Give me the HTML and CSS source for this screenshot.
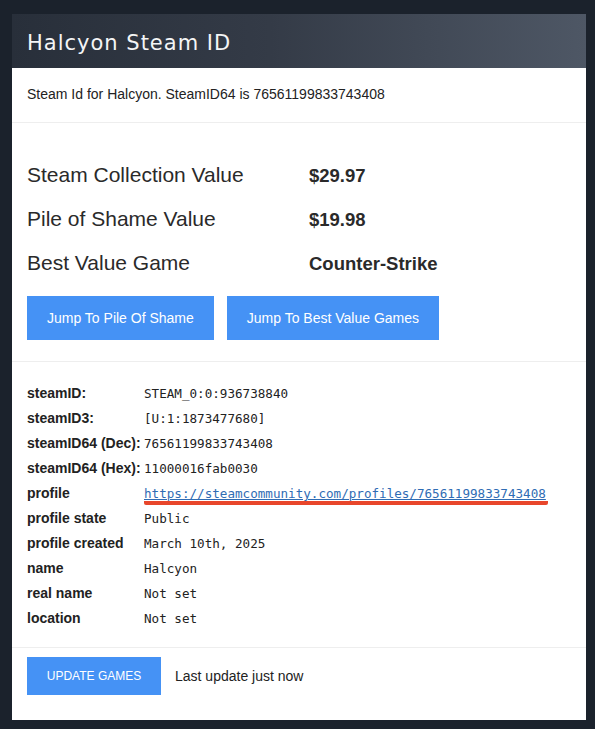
FILE: index.html
```html
<!DOCTYPE html>
<html lang="en">
<head>
<meta charset="utf-8">
<title>Halcyon Steam ID</title>
<link rel="stylesheet" href="styles.css">
</head>
<body>
<div class="card">
  <div class="card-header"><h1 class="title">Halcyon Steam ID</h1></div>
  <div class="section intro">Steam Id for Halcyon. SteamID64 is 76561199833743408</div>
  <div class="section values">
    <div class="value-grid">
      <div class="v-label">Steam Collection Value</div><div class="v-value">$29.97</div>
      <div class="v-label">Pile of Shame Value</div><div class="v-value">$19.98</div>
      <div class="v-label">Best Value Game</div><div class="v-value">Counter-Strike</div>
    </div>
    <div class="btn-row">
      <a class="btn btn-lg" href="#shame">Jump To Pile Of Shame</a>
      <a class="btn btn-lg" href="#best">Jump To Best Value Games</a>
    </div>
  </div>
  <div class="section info">
    <dl class="info-grid">
      <dt>steamID:</dt><dd>STEAM_0:0:936738840</dd>
      <dt>steamID3:</dt><dd>[U:1:1873477680]</dd>
      <dt>steamID64 (Dec):</dt><dd>76561199833743408</dd>
      <dt>steamID64 (Hex):</dt><dd>11000016fab0030</dd>
      <dt>profile</dt><dd><span class="mark"><a class="link" href="#">https://steamcommunity.com/profiles/76561199833743408</a></span></dd>
      <dt>profile state</dt><dd>Public</dd>
      <dt>profile created</dt><dd>March 10th, 2025</dd>
      <dt>name</dt><dd>Halcyon</dd>
      <dt>real name</dt><dd>Not set</dd>
      <dt>location</dt><dd>Not set</dd>
    </dl>
  </div>
  <div class="section footer">
    <a class="btn btn-sm" href="#">UPDATE GAMES</a>
    <span class="updated">Last update just now</span>
  </div>
</div>
</body>
</html>
```
FILE: styles.css
```css
* { box-sizing: border-box; }
html, body { margin: 0; }
body {
  background: #1b222c;
  padding: 14px 9px 9px 12px;
  font-family: "Liberation Sans", Arial, sans-serif;
  color: #222;
}
.card {
  width: 574px;
  background: #fff;
}
.card-header {
  height: 54px;
  display: flex;
  align-items: center;
  padding: 0 15px;
  background: linear-gradient(90deg, #282f3a 0%, #343b47 45%, #4e5765 100%);
}
.title {
  margin: 0;
  font-family: "DejaVu Sans", sans-serif;
  font-weight: normal;
  font-size: 21px;
  letter-spacing: 1px;
  color: #f4f5f6;
  line-height: 1;
  padding-top: 5px;
}
.section {
  padding: 0 15px;
  border-bottom: 1px solid #eeeeee;
}
.intro {
  font-size: 14px;
  line-height: 16px;
  padding-top: 18px;
  padding-bottom: 20px;
}
.values {
  padding-top: 29px;
  padding-bottom: 21px;
}
.value-grid {
  display: grid;
  grid-template-columns: 282px 1fr;
  grid-auto-rows: 44px;
  align-items: center;
}
.v-label {
  font-size: 21px;
  line-height: 24px;
  padding-top: 2px;
  color: #2a2a2a;
}
.v-value {
  font-size: 18.5px;
  font-weight: bold;
  line-height: 24px;
  padding-top: 3px;
  color: #2a2a2a;
}
.btn-row {
  display: flex;
  gap: 13px;
  margin-top: 12px;
}
.btn {
  display: inline-flex;
  align-items: center;
  justify-content: center;
  background: #4592f5;
  color: #fff;
  text-decoration: none;
  padding: 0 20px;
}
.btn-lg {
  height: 44px;
  font-size: 14px;
}
.btn-sm {
  height: 38px;
  font-size: 12px;
  width: 134px;
  padding: 0;
}
.info {
  padding-top: 19px;
  padding-bottom: 16px;
}
.info-grid {
  margin: 0;
  display: grid;
  grid-template-columns: 117px 1fr;
  align-items: baseline;
}
.info-grid dt {
  font-size: 14px;
  font-weight: bold;
  line-height: 25px;
  color: #222;
}
.info-grid dd {
  margin: 0;
  font-family: "DejaVu Sans Mono", monospace;
  font-size: 12.6px;
  line-height: 25px;
  color: #222;
}
.mark {
  border-bottom: 4px solid #e8462b;
  border-radius: 2px;
  padding-bottom: 0;
  padding-right: 2px;
}
.link {
  color: #2f6cb4;
  text-decoration: underline;
  text-underline-offset: 1px;
}
.footer {
  border-bottom: none;
  display: flex;
  align-items: center;
  gap: 14px;
  padding-top: 9px;
  padding-bottom: 25px;
}
.updated {
  font-size: 14px;
  color: #222;
}
```
